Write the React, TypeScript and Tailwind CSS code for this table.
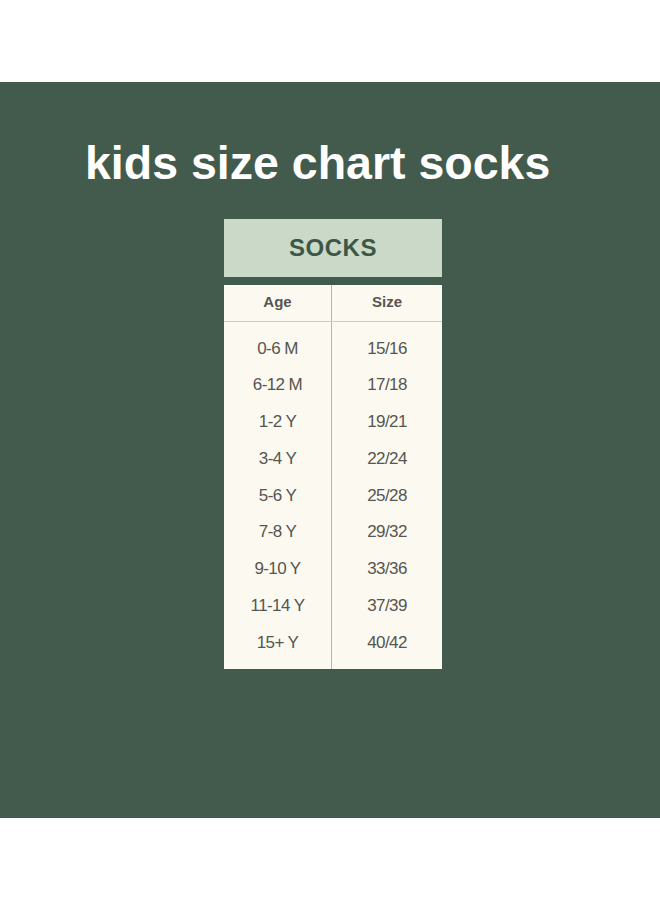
const ROWS = [
  ["0-6 M", "15/16"],
  ["6-12 M", "17/18"],
  ["1-2 Y", "19/21"],
  ["3-4 Y", "22/24"],
  ["5-6 Y", "25/28"],
  ["7-8 Y", "29/32"],
  ["9-10 Y", "33/36"],
  ["11-14 Y", "37/39"],
  ["15+ Y", "40/42"],
];

export default function App() {
  return (
    <div className="min-h-[900px] w-[660px] bg-white font-['Liberation_Sans',Arial,sans-serif]">
      <div className="h-[82px]" />

      {/* green panel */}
      <div className="h-[736px] bg-[#435b4d] pt-[58px]">
        <h1 className="pl-[85px] text-[46.5px] font-bold leading-none text-white">
          kids size chart socks
        </h1>

        <div className="ml-[224px] mt-[32px] w-[218px]">
          <div className="flex h-[58px] items-center justify-center bg-[#cbdac8] text-[24px] font-bold tracking-[0.5px] text-[#3d5646]">
            SOCKS
          </div>

          <div className="mt-[8px] bg-[#fcf9f0] text-[#555651]">
            <div className="flex h-[37px] border-b border-[#cfcbc0] text-[15px] font-bold">
              <div className="flex w-[108px] items-center justify-center border-r border-[#b9b6ab]">Age</div>
              <div className="flex flex-1 items-center justify-center">Size</div>
            </div>
            <div className="flex text-[17px] tracking-[-0.6px]">
              <div className="w-[108px] border-r border-[#b9b6ab] py-[8.5px]">
                {ROWS.map(([age]) => (
                  <div key={age} className="flex h-[36.75px] items-center justify-center">{age}</div>
                ))}
              </div>
              <div className="flex-1 py-[8.5px]">
                {ROWS.map(([age, size]) => (
                  <div key={age} className="flex h-[36.75px] items-center justify-center">{size}</div>
                ))}
              </div>
            </div>
          </div>
        </div>
      </div>
    </div>
  );
}
